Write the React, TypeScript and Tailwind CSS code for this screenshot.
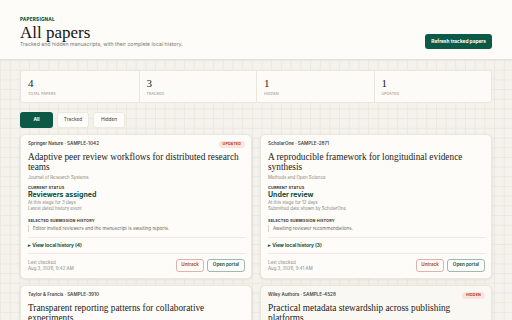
type Paper = {
  source: string;
  id: string;
  title: [string, string];
  journal: string;
  status: string;
  days: string;
  note: string;
  history: string;
  count: number;
  checked: string;
  badge?: "UPDATED" | "HIDDEN";
};

// titles are kept as the two lines they wrap to in the card
const PAPERS: Paper[] = [
  {
    source: "Springer Nature",
    id: "SAMPLE-1042",
    title: ["Adaptive peer review workflows for distributed research", "teams"],
    journal: "Journal of Research Systems",
    status: "Reviewers assigned",
    days: "At this stage for 3 days",
    note: "Latest dated history event",
    history: "Editor invited reviewers and the manuscript is awaiting reports.",
    count: 4,
    checked: "Aug 3, 2026, 9:42 AM",
    badge: "UPDATED",
  },
  {
    source: "ScholarOne",
    id: "SAMPLE-2871",
    title: ["A reproducible framework for longitudinal evidence", "synthesis"],
    journal: "Methods and Open Science",
    status: "Under review",
    days: "At this stage for 12 days",
    note: "Submitted date shown by ScholarOne",
    history: "Awaiting reviewer recommendations.",
    count: 3,
    checked: "Aug 3, 2026, 9:41 AM",
  },
  {
    source: "Taylor & Francis",
    id: "SAMPLE-3910",
    title: ["Transparent reporting patterns for collaborative", "experiments"],
    journal: "Open Research Practice",
    status: "Submitted",
    days: "At this stage for 6 days",
    note: "Latest dated history event",
    history: "Manuscript received by the editorial office.",
    count: 2,
    checked: "Aug 3, 2026, 9:40 AM",
  },
  {
    source: "Wiley Authors",
    id: "SAMPLE-4528",
    title: ["Practical metadata stewardship across publishing", "platforms"],
    journal: "Scholarly Infrastructure",
    status: "With editor",
    days: "At this stage for 9 days",
    note: "Latest dated history event",
    history: "Editor assessing the submission.",
    count: 2,
    checked: "Aug 3, 2026, 9:39 AM",
    badge: "HIDDEN",
  },
];

const STATS = [
  { n: 4, label: "Total papers" },
  { n: 3, label: "Tracked" },
  { n: 1, label: "Hidden" },
  { n: 1, label: "Updated" },
];

const serif = "font-['Liberation_Serif',serif]";

function Card({ p }: { p: Paper }) {
  const hidden = p.badge === "HIDDEN";
  return (
    <div
      className={`rounded-[5px] border border-[#e9e6dd] pl-[7px] pr-[6px] pt-[5px] pb-[6px] shadow-[0_1px_3px_rgba(60,50,30,0.09)] ${
        hidden ? "bg-[#f9f8f3]" : "bg-[#fdfcf8]"
      }`}
    >
      <div className="flex h-[9px] items-center justify-between">
        <span className="text-[4.6px] font-semibold text-[#4a4740]">
          {p.source} · {p.id}
        </span>
        {p.badge && (
          <span className="rounded-full bg-[#fbe4dc] px-[4px] py-[1px] text-[3.6px] font-bold tracking-[0.06em] text-[#b23a2a]">
            {p.badge}
          </span>
        )}
      </div>
      <h2 className={`${serif} mt-[2.5px] whitespace-nowrap text-[9.3px] leading-[10px] text-[#1c1b18]`}>
        {p.title[0]}
        <br />
        {p.title[1]}
      </h2>
      <p className="mt-[3px] text-[4.4px] leading-[6px] text-[#8a867c]">{p.journal}</p>
      <p className="mt-[4px] text-[3.8px] leading-[6px] font-bold tracking-[0.04em] text-[#35332e]">CURRENT STATUS</p>
      <p className="text-[7px] leading-[8px] font-bold text-[#0c4f3c]">{p.status}</p>
      <p className="mt-[1.5px] text-[4.4px] leading-[6.3px] text-[#8a867c]">{p.days}</p>
      <p className="text-[4.4px] leading-[6.3px] text-[#8a867c]">{p.note}</p>
      <p className="mt-[5px] text-[3.8px] leading-[6px] font-bold tracking-[0.04em] text-[#35332e]">
        SELECTED SUBMISSION HISTORY
      </p>
      <div className="mt-[1px] border-l border-[#d6d2c7] pl-[4px] text-[4.6px] leading-[7px] text-[#6f6b62]">
        {p.history}
      </div>
      <div className="mt-[5.5px] border-y border-[#ece9e1] pt-[3.5px] pb-[5px] text-[4.8px] leading-[6px] font-bold text-[#0c4f3c]">
        ▸ View local history ({p.count})
      </div>
      <div className="mt-[5.5px] flex items-center justify-between">
        <div className="text-[4.4px] leading-[6px] text-[#8a867c]">
          <div>Last checked</div>
          <div>{p.checked}</div>
        </div>
        <div className="flex gap-[3px]">
          <button className="h-[13px] rounded-[3px] border border-[#e2b2a6] px-[4px] text-[4.6px] font-semibold text-[#b23a2a]">
            Untrack
          </button>
          <button className="h-[13px] rounded-[3px] border border-[#9fb9ae] px-[5px] text-[4.6px] font-semibold text-[#0c4f3c]">
            Open portal
          </button>
        </div>
      </div>
    </div>
  );
}

export default function App() {
  return (
    <div className="h-[320px] w-[512px] overflow-hidden bg-[#f4f2ec] font-['Inter',sans-serif]">
      <header className="flex h-[60px] items-end justify-between border-b border-[#e6e3da] bg-[#fdfcf8] px-5 pb-[11px]">
        <div>
          <p className="text-[4.6px] leading-[6px] font-extrabold tracking-[0.05em] text-[#0c5a45]">PAPERSIGNAL</p>
          <h1 className={`${serif} mt-[1.5px] text-[17px] leading-[17px] text-[#161513]`}>All papers</h1>
          <p className="text-[5.2px] leading-[7px] text-[#7d796f]">
            Tracked and hidden manuscripts, with their complete local history.
          </p>
        </div>
        <button className="mb-[-1px] h-[15px] rounded-[3px] bg-[#0c5a45] px-[6px] text-[4.8px] font-bold text-white">
          Refresh tracked papers
        </button>
      </header>

      <main className="bg-[linear-gradient(to_right,#ebe8e0_1px,transparent_1px),linear-gradient(to_bottom,#ebe8e0_1px,transparent_1px)] bg-[size:9.7px_9.7px] px-5 pt-[10px]">
        <div className="grid grid-cols-4 rounded-[3px] border border-[#e9e6dd] bg-[#fcfbf7]">
          {STATS.map((s, i) => (
            <div key={s.label} className={`h-[31px] px-[7px] pt-[6px] ${i > 0 ? "border-l border-[#e9e6dd]" : ""}`}>
              <div className={`${serif} text-[11px] leading-[12px] text-[#1c1b18]`}>{s.n}</div>
              <div className="mt-[3px] text-[3.6px] uppercase tracking-[0.04em] text-[#8a867c]">{s.label}</div>
            </div>
          ))}
        </div>

        <div className="mt-[9px] flex gap-[4px]">
          <button className="h-[16px] w-[33px] rounded-[3px] bg-[#0c5a45] text-[4.8px] font-bold text-white">All</button>
          <button className="h-[16px] w-[32px] rounded-[3px] border border-[#ebe8df] bg-[#fdfcf8] text-[4.8px] text-[#3d3a34]">
            Tracked
          </button>
          <button className="h-[16px] w-[32px] rounded-[3px] border border-[#ebe8df] bg-[#fdfcf8] text-[4.8px] text-[#3d3a34]">
            Hidden
          </button>
        </div>

        <div className="mt-[6px] grid grid-cols-2 gap-x-[8px] gap-y-[6px]">
          {PAPERS.map((p) => (
            <Card key={p.id} p={p} />
          ))}
        </div>
      </main>
    </div>
  );
}
